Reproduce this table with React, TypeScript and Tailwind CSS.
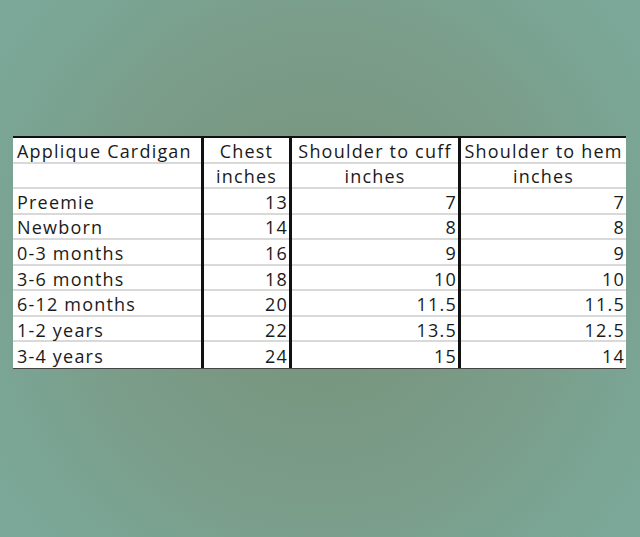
import React from "react";

const labels = ["Preemie", "Newborn", "0-3 months", "3-6 months", "6-12 months", "1-2 years", "3-4 years"];
const chest = ["13", "14", "16", "18", "20", "22", "24"];
const cuff = ["7", "8", "9", "10", "11.5", "13.5", "15"];
const hem = ["7", "8", "9", "10", "11.5", "12.5", "14"];

function Column({
  width,
  head,
  sub,
  values,
  headAlign,
  valueAlign,
  first,
}: {
  width: string;
  head: string;
  sub: string;
  values: string[];
  headAlign: string;
  valueAlign: string;
  first?: boolean;
}) {
  const cells = [head, sub, ...values];
  return (
    <div className={`flex flex-col ${width} ${first ? "" : "border-l-[3px] border-[#111]"}`}>
      {cells.map((c, i) => (
        <div
          key={i}
          className={`h-[25.55px] flex items-center pt-[2px] ${i < 2 ? headAlign : valueAlign} ${
            i < cells.length - 1 ? "border-b-2 border-[#d9d9d9]" : ""
          } ${first ? "pl-[4px]" : "px-[1px]"} leading-none`}
        >
          <span className="whitespace-nowrap">{c}</span>
        </div>
      ))}
    </div>
  );
}

export default function App() {
  return (
    <div className="w-[640px] h-[537px] overflow-hidden bg-[radial-gradient(ellipse_60%_75%_at_50%_50%,#77927a_0%,#7a9c88_55%,#7ba899_100%)] pt-[136px] pl-[13px]">
      <div
        className="flex w-[613px] bg-white border-t-2 border-b border-t-[#111] border-b-[#444] text-[#1a1a1a] text-[18px] tracking-[1.2px]"
        style={{ fontFamily: '"Open Sans", sans-serif' }}
      >
        <Column width="w-[188px]" head="Applique Cardigan" sub="" values={labels} headAlign="justify-start" valueAlign="justify-start" first />
        <Column width="w-[88px]" head="Chest" sub="inches" values={chest} headAlign="justify-center" valueAlign="justify-end" />
        <Column width="w-[169px]" head="Shoulder to cuff" sub="inches" values={cuff} headAlign="justify-center" valueAlign="justify-end" />
        <Column width="w-[168px]" head="Shoulder to hem" sub="inches" values={hem} headAlign="justify-center" valueAlign="justify-end" />
      </div>
    </div>
  );
}
